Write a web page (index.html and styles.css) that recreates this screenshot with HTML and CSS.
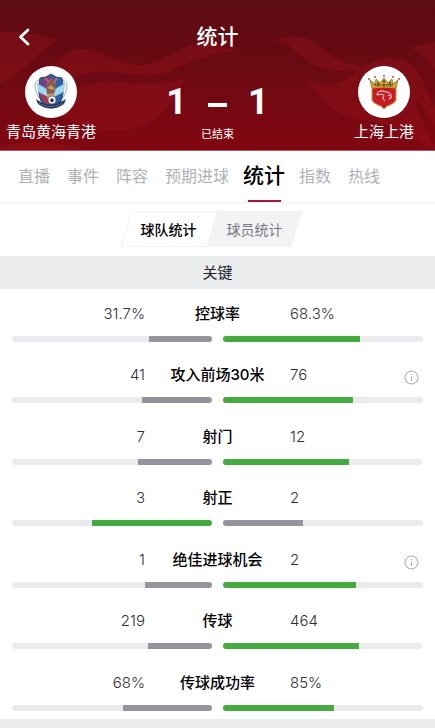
FILE: index.html
```html
<!DOCTYPE html>
<html lang="zh-CN">
<head>
<meta charset="utf-8">
<meta name="viewport" content="width=device-width, initial-scale=1">
<title>统计</title>
<link rel="stylesheet" href="styles.css">
</head>
<body>
<header class="hero">
  <svg class="hero-waves" viewBox="0 0 435 150" preserveAspectRatio="none" aria-hidden="true">
    <path d="M0 32C22 30 42 36 60 40C44 45 36 58 22 70C14 77 7 81 0 83Z"/>
    <path d="M50 72C60 58 66 49 82 49C106 50 114 64 140 65C168 62 176 46 208 40L240 53C212 49 184 66 164 73C132 80 112 66 84 74C70 80 60 84 50 72Z"/>
    <path d="M62 98C92 76 112 83 142 84C164 84 176 81 186 78C176 92 172 110 150 122C126 135 96 132 62 118Z"/>
    <path d="M274 41C286 34 304 34 318 45C334 58 346 68 368 66C352 74 332 72 314 65C298 58 294 42 274 41Z"/>
    <path d="M306 78C322 90 338 86 352 75C366 62 384 54 404 60C420 68 424 86 435 108V126C428 112 422 104 414 100C420 118 430 136 435 150C414 140 398 124 370 121C334 118 324 102 306 78Z"/>
    <path d="M408 47C420 46 428 43 435 41V70C428 60 420 50 408 47Z"/>
    <path d="M0 148C24 138 54 140 84 150H0Z"/>
  </svg>
  <div class="nav">
    <button class="back" type="button" aria-label="返回">
      <svg width="12" height="18" viewBox="0 0 12 18"><path d="M10 2L2.500 9L10 16" fill="none" stroke="#fff" stroke-width="2.800" stroke-linecap="round" stroke-linejoin="round"/></svg>
    </button>
    <h1 class="title">统计</h1>
  </div>
  <div class="match">
    <div class="team">
      <span class="badge">
        <svg width="52" height="52" viewBox="0 0 52 52" aria-hidden="true">
          <path d="M15 14C10 14 9 19 11 25C12 30 14 32 16 33M36 14C42 14 43 19 41 25C40 30 38 32 36 33" fill="#fff" stroke="#9aa9b8"/>
          <path d="M15 12Q21 12 26 8Q31 12 37 12Q40 27 36 35Q32 40 26 42Q19 40 16 35Q12 27 15 12Z" fill="#2563a5" stroke="#354062"/>
          <path d="M16 13Q22 12 26 9V24L15 22Z" fill="#6b4387"/>
          <path d="M15 27L25 26V40Q18 37 15 30Z" fill="#a83858"/>
          <path d="M12 17L24 24L23 31L13 26ZM40 17L28 24L29 31L39 26Z" fill="#8bcbed"/>
          <path d="M13 20L23 27M13 23L23 29M39 20L29 27M39 23L29 29" stroke="#e8f6ff" stroke-width=".7"/>
          <path d="M23 14L26 12L30 14L31 20L29 29L25 32L22 28L21 19Z" fill="#865b52"/>
          <path d="M22 22L26 19L30 23L27 24ZM22 28L30 27L28 34L23 35Z" fill="#c49a63"/>
          <path d="M20 12L24 16M32 12L29 17" stroke="#d65b75" stroke-width="2"/>
          <path d="M11 33Q25 44 41 33L39 38Q26 47 13 38Z" fill="#1c3156"/>
          <path d="M14 37Q26 44 38 37" fill="none" stroke="#b7c3d4" stroke-dasharray="1 1"/>
          <circle cx="27" cy="34" r="4" fill="#fff" stroke="#3a4254" stroke-width=".6"/>
          <path d="M27 32L29 34L28 36H26L25 34Z" fill="#202b40"/>
        </svg>
      </span>
      <span class="team-name">青岛黄海青港</span>
    </div>
    <div class="result">
      <div class="score"><span>1</span><span class="dash"></span><span>1</span></div>
      <div class="status">已结束</div>
    </div>
    <div class="team">
      <span class="badge">
        <svg width="52" height="52" viewBox="0 0 52 52" aria-hidden="true">
          <path d="M14 22L12 14L17 18L18 13L22 17L26 12L30 17L34 13L35 18L40 14L38 22Z" fill="#d2a72c" stroke="#65491b" stroke-width=".6"/>
          <g fill="#c4473b"><circle cx="11" cy="13" r="1"/><circle cx="17" cy="11" r="1"/><circle cx="26" cy="10" r="1"/><circle cx="35" cy="11" r="1"/><circle cx="41" cy="13" r="1"/></g>
          <path d="M16 19H36M20 16V21M26 14V21M32 16V21" stroke="#3e321c" stroke-width="1.200" stroke-dasharray="3 1"/>
          <path d="M14 22Q26 20 38 22V34Q37 37 32 39Q28 40 26 43Q24 40 20 39Q15 37 14 34Z" fill="#c81c26" stroke="#c99a34"/>
          <path d="M19 29C19 25 24 24 28 26C32 26 34 29 33 32L31 33M30 29L32 30M19 29C22 28 26 28 26 30C24 31 25 33 27 35" fill="none" stroke="#fff"/>
        </svg>
      </span>
      <span class="team-name">上海上港</span>
    </div>
  </div>
</header>

<nav class="tabs">
  <a href="#live">直播</a>
  <a href="#events">事件</a>
  <a href="#lineup">阵容</a>
  <a href="#xg">预期进球</a>
  <a href="#stats" class="active" aria-current="page">统计</a>
  <a href="#odds">指数</a>
  <a href="#hotline">热线</a>
</nav>

<main class="content">
  <div class="switch-row">
    <div class="switch">
      <button type="button" class="selected" aria-pressed="true">球队统计</button>
      <button type="button" aria-pressed="false">球员统计</button>
    </div>
  </div>
  <h2 class="section-title">关键</h2>
  <div class="stats">
    <section class="stat">
      <div class="figures"><span class="home">31.7%</span><h3>控球率</h3><span>68.3%</span></div>
      <div class="bars"><div class="bar left"><div class="fill" style="width:31.7%"></div></div><div class="bar"><div class="fill lead" style="width:68.3%"></div></div></div>
    </section>
    <section class="stat">
      <div class="figures"><span class="home">41</span><h3>攻入前场30米</h3><span>76</span></div>
      <div class="bars"><div class="bar left"><div class="fill" style="width:35%"></div></div><div class="bar"><div class="fill lead" style="width:65%"></div></div></div>
      <button class="info" type="button" aria-label="说明"><svg width="15" height="15" viewBox="0 0 15 15"><circle cx="7.500" cy="7.500" r="6.500"/><path d="M7.500 6.500V11M7.500 4V5"/></svg></button>
    </section>
    <section class="stat">
      <div class="figures"><span class="home">7</span><h3>射门</h3><span>12</span></div>
      <div class="bars"><div class="bar left"><div class="fill" style="width:36.8%"></div></div><div class="bar"><div class="fill lead" style="width:63.2%"></div></div></div>
    </section>
    <section class="stat">
      <div class="figures"><span class="home">3</span><h3>射正</h3><span>2</span></div>
      <div class="bars"><div class="bar left"><div class="fill lead" style="width:60%"></div></div><div class="bar"><div class="fill" style="width:40%"></div></div></div>
    </section>
    <section class="stat">
      <div class="figures"><span class="home">1</span><h3>绝佳进球机会</h3><span>2</span></div>
      <div class="bars"><div class="bar left"><div class="fill" style="width:33.3%"></div></div><div class="bar"><div class="fill lead" style="width:66.7%"></div></div></div>
      <button class="info" type="button" aria-label="说明"><svg width="15" height="15" viewBox="0 0 15 15"><circle cx="7.500" cy="7.500" r="6.500"/><path d="M7.500 6.500V11M7.500 4V5"/></svg></button>
    </section>
    <section class="stat">
      <div class="figures"><span class="home">219</span><h3>传球</h3><span>464</span></div>
      <div class="bars"><div class="bar left"><div class="fill" style="width:32.1%"></div></div><div class="bar"><div class="fill lead" style="width:67.9%"></div></div></div>
    </section>
    <section class="stat">
      <div class="figures"><span class="home">68%</span><h3>传球成功率</h3><span>85%</span></div>
      <div class="bars"><div class="bar left"><div class="fill" style="width:44.4%"></div></div><div class="bar"><div class="fill lead" style="width:55.6%"></div></div></div>
    </section>
  </div>
</main>
</body>
</html>
```
FILE: styles.css
```css
* {
  box-sizing: border-box;
}

body {
  display: flex;
  flex-direction: column;
  min-height: 100vh;
  margin: 0;
  background: #fff;
  color: #111116;
  font-family: Inter, "Noto Sans CJK SC", sans-serif;
}

button {
  margin: 0;
  padding: 0;
  border: 0;
  background: none;
  color: inherit;
  font: inherit;
}

h1,
h2,
h3 {
  margin: 0;
  font-weight: 500;
}

svg {
  display: block;
}

/* Match header */

.hero {
  position: relative;
  padding-top: 20px;
  border-bottom: 1px solid #a85a60;
  background: linear-gradient(#5b0c12, #6b0a13 45%, #820711);
  color: #fff;
}

.hero-waves {
  position: absolute;
  inset: 0;
  width: 100%;
  height: 100%;
  fill: #a4161b;
  fill-opacity: 0.28;
}

.nav {
  position: relative;
  display: grid;
  grid-template-columns: 48px 1fr 48px;
  align-items: center;
  height: 34px;
}

.back {
  display: flex;
  justify-content: center;
}

.title {
  font-size: 21px;
  line-height: 34px;
  text-align: center;
}

.match {
  position: relative;
  display: flex;
  justify-content: space-between;
  padding-top: 12px;
}

.team {
  display: flex;
  flex-direction: column;
  align-items: center;
  width: 102px;
  height: 84px;
}

.badge {
  width: 52px;
  height: 52px;
  border-radius: 50%;
  background: #fff;
}

.team-name {
  font-size: 15px;
  line-height: 28px;
  white-space: nowrap;
}

.result {
  padding-top: 17px;
  text-align: center;
}

.score {
  display: flex;
  align-items: center;
  justify-content: center;
  gap: 21px;
  font-family: Roboto, sans-serif;
  font-size: 36px;
  font-weight: 700;
  line-height: 38px;
}

.dash {
  width: 19px;
  height: 4px;
  margin-top: 6px;
  background: #fff;
}

.status {
  font-size: 11px;
  line-height: 26px;
}

/* Tabs */

.tabs {
  display: flex;
  gap: 1px;
  height: 52px;
  padding: 0 10px;
  border-bottom: 1px solid #f3f3f4;
}

.tabs a {
  position: relative;
  padding: 0 8px;
  color: #b0b0b5;
  font-size: 16px;
  line-height: 50px;
  text-decoration: none;
  white-space: nowrap;
}

.tabs .active {
  padding: 0 5px;
  color: #000;
  font-size: 21px;
  font-weight: 500;
}

.tabs .active::after {
  content: "";
  position: absolute;
  bottom: 0;
  left: 50%;
  width: 33px;
  height: 2px;
  margin-left: -16px;
  background: #a31640;
}

/* Team / player switch */

.content {
  display: flex;
  flex: 1;
  flex-direction: column;
  border-bottom: 9px solid #ebecee;
}

.switch-row {
  display: flex;
  justify-content: center;
  padding: 8px 12px 9px 0;
}

.switch {
  display: flex;
  width: 182px;
  height: 36px;
  background: #f3f3f4;
  clip-path: polygon(11px 0, 100% 0, calc(100% - 11px) 100%, 0 100%);
}

.switch button {
  flex: 1;
  padding-right: 10px;
  color: #77777f;
  font-size: 14px;
}

.switch .selected {
  position: relative;
  flex: 0 0 96px;
  padding: 0;
  color: #000;
  font-weight: 500;
}

.switch .selected::before {
  content: "";
  position: absolute;
  z-index: -1;
  inset: 1px 0 1px 1px;
  background: #fff;
  clip-path: polygon(11px 0, 100% 0, calc(100% - 10px) 100%, 1px 100%);
}

/* Statistics */

.section-title {
  background: #ebecee;
  color: #222228;
  font-size: 15px;
  font-weight: 400;
  line-height: 33px;
  text-align: center;
}

.stats {
  display: flex;
  flex: 1;
  flex-direction: column;
}

.stat {
  position: relative;
  flex: 1;
  padding: 12px 12px 8px;
}

.figures {
  display: grid;
  grid-template-columns: repeat(3, 1fr);
  align-items: center;
  margin: 0 -12px 9px;
  color: #303038;
  font-size: 15px;
  font-weight: 300;
  line-height: 26px;
}

.figures h3 {
  color: #000;
  font-size: 15px;
  text-align: center;
}

.home {
  text-align: right;
}

.bars {
  display: grid;
  grid-template-columns: 1fr 1fr;
  gap: 11px;
}

.bar {
  display: flex;
  height: 6px;
  overflow: hidden;
  border-radius: 3px;
  background: #ebebed;
}

.left {
  justify-content: flex-end;
}

.fill {
  background: #93959d;
}

.lead {
  background: #45ab40;
}

.info {
  position: absolute;
  top: 20px;
  right: 16px;
}

.info svg {
  fill: none;
  stroke: #a5a5aa;
}
```
